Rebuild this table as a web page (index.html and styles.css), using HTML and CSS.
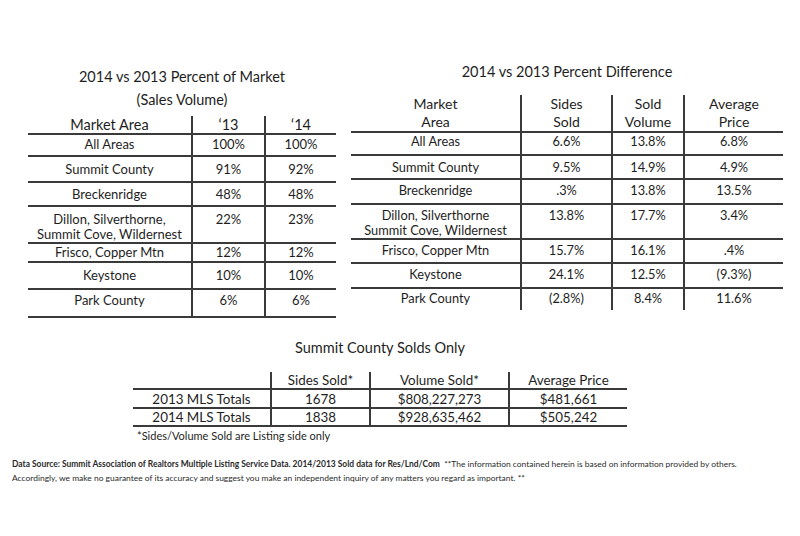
FILE: index.html
```html
<!DOCTYPE html>
<html>
<head>
<meta charset="utf-8">
<link rel="stylesheet" href="styles.css">
</head>
<body>
<div class="page">
  <div class="top">
    <section class="block block-left">
      <div class="title">2014 vs 2013 Percent of Market</div>
      <div class="subtitle">(Sales Volume)</div>
      <table class="grid grid-left">
        <colgroup><col class="lc1"><col class="lc2"><col class="lc3"></colgroup>
        <thead>
          <tr class="lh"><th>Market Area</th><th>‘13</th><th>‘14</th></tr>
        </thead>
        <tbody>
          <tr class="l1"><td>All Areas</td><td>100%</td><td>100%</td></tr>
          <tr class="l2 mid"><td>Summit County</td><td>91%</td><td>92%</td></tr>
          <tr class="l3 mid"><td>Breckenridge</td><td>48%</td><td>48%</td></tr>
          <tr class="l4"><td>Dillon, Silverthorne,<br>Summit Cove, Wildernest</td><td>22%</td><td>23%</td></tr>
          <tr class="l5 mid"><td>Frisco, Copper Mtn</td><td>12%</td><td>12%</td></tr>
          <tr class="l6 mid"><td>Keystone</td><td>10%</td><td>10%</td></tr>
          <tr class="l7"><td>Park County</td><td>6%</td><td>6%</td></tr>
        </tbody>
      </table>
    </section>
    <section class="block block-right">
      <div class="title">2014 vs 2013 Percent Difference</div>
      <table class="grid grid-right">
        <colgroup><col class="rc1"><col class="rc2"><col class="rc3"><col class="rc4"></colgroup>
        <thead>
          <tr class="rh"><th>Market<br>Area</th><th>Sides<br>Sold</th><th>Sold<br>Volume</th><th>Average<br>Price</th></tr>
        </thead>
        <tbody>
          <tr class="r1"><td>All Areas</td><td>6.6%</td><td>13.8%</td><td>6.8%</td></tr>
          <tr class="r2 mid"><td>Summit County</td><td>9.5%</td><td>14.9%</td><td>4.9%</td></tr>
          <tr class="r3"><td>Breckenridge</td><td>.3%</td><td>13.8%</td><td>13.5%</td></tr>
          <tr class="r4"><td>Dillon, Silverthorne<br>Summit Cove, Wildernest</td><td>13.8%</td><td>17.7%</td><td>3.4%</td></tr>
          <tr class="r5"><td>Frisco, Copper Mtn</td><td>15.7%</td><td>16.1%</td><td>.4%</td></tr>
          <tr class="r6"><td>Keystone</td><td>24.1%</td><td>12.5%</td><td>(9.3%)</td></tr>
          <tr class="r7"><td>Park County</td><td>(2.8%)</td><td>8.4%</td><td>11.6%</td></tr>
        </tbody>
      </table>
    </section>
  </div>

  <section class="solds">
    <div class="title">Summit County Solds Only</div>
    <table class="grid grid-solds">
      <colgroup><col class="sc1"><col class="sc2"><col class="sc3"><col class="sc4"></colgroup>
      <thead>
        <tr class="sh"><th></th><th>Sides Sold*</th><th>Volume Sold*</th><th>Average Price</th></tr>
      </thead>
      <tbody>
        <tr class="s1"><td>2013 MLS Totals</td><td>1678</td><td>$808,227,273</td><td>$481,661</td></tr>
        <tr class="s2"><td>2014 MLS Totals</td><td>1838</td><td>$928,635,462</td><td>$505,242</td></tr>
      </tbody>
    </table>
    <div class="footnote">*Sides/Volume Sold are Listing side only</div>
  </section>

  <footer class="source">
    <p class="src-line"><b>Data Source: Summit Association of Realtors Multiple Listing Service Data. 2014/2013 Sold data for Res/Lnd/Com</b>&nbsp; **The information contained herein is based on information provided by others.</p>
    <p class="src-line">Accordingly, we make no guarantee of its accuracy and suggest you make an independent inquiry of any matters you regard as important. **</p>
  </footer>
</div>
</body>
</html>
```

FILE: styles.css
```css
html, body {
  margin: 0;
  padding: 0;
  background: #ffffff;
}

body {
  font-family: "Lato", "Open Sans", sans-serif;
  color: #1e1e1e;
  width: 800px;
  height: 536px;
  overflow: hidden;
}

.page {
  display: flex;
  flex-direction: column;
}

.top {
  display: flex;
  align-items: flex-start;
  padding-left: 28px;
  gap: 15px;
}

.block {
  display: flex;
  flex-direction: column;
}

.block-left {
  width: 308px;
  padding-top: 67px;
}

.block-right {
  width: 432px;
  padding-top: 62px;
}

.title {
  font-size: 14.5px;
  line-height: 20px;
  text-align: center;
}

.block-left .title {
  margin-bottom: 3px;
}

.subtitle {
  font-size: 14.5px;
  line-height: 20px;
  text-align: center;
  margin-bottom: 6px;
}

.block-right .title {
  margin-bottom: 13px;
}

/* tables */
.grid {
  border-collapse: separate;
  border-spacing: 0;
  table-layout: fixed;
}

.grid th,
.grid td {
  padding: 0;
  text-align: center;
  font-weight: normal;
  vertical-align: top;
  white-space: nowrap;
  box-sizing: border-box;
  border-bottom: 2px solid #3a3a3a;
}

.grid th + th,
.grid td + td {
  border-left: 2px solid #3a3a3a;
}

.grid-right tbody tr:last-child td {
  border-bottom: none;
}

.grid tr.mid td {
  vertical-align: middle;
}

/* left table */
.grid-left { width: 308px; }
.lc1 { width: 163px; }
.lc2 { width: 73px; }
.lc3 { width: 72px; }

.grid-left th {
  font-size: 14.5px;
  line-height: 16px;
  height: 17px;
  padding-top: 1px;
}

.grid-left td {
  font-size: 13px;
  line-height: 15px;
}

.l1 td { height: 22px; padding-top: 2px; }
.l2 td { height: 26px; }
.l3 td { height: 24px; }
.l4 td { height: 36px; padding-top: 5px; }
.l5 td { height: 19px; }
.l6 td { height: 27px; }
.l7 td { height: 28px; padding-top: 3px; }

/* right table */
.grid-right { width: 432px; }
.rc1 { width: 169px; }
.rc2 { width: 91px; }
.rc3 { width: 72px; }
.rc4 { width: 100px; }

.grid-right th {
  font-size: 14px;
  line-height: 18px;
  height: 38px;
  vertical-align: middle;
}

.grid-right td {
  font-size: 12.8px;
  line-height: 15px;
}

.r1 td { height: 23px; padding-top: 1px; }
.r2 td { height: 24px; }
.r3 td { height: 25px; padding-top: 3px; }
.r4 td { height: 33px; padding-top: 3px; }
.r5 td { height: 24px; padding-top: 3px; }
.r6 td { height: 25px; padding-top: 3px; }
.r7 td { height: 21px; padding-top: 2px; }

/* solds table */
.solds {
  width: 494px;
  margin-left: 133px;
  margin-top: 20px;
  display: flex;
  flex-direction: column;
}

.solds .title {
  margin-bottom: 14px;
}

.grid-solds { width: 494px; }
.sc1 { width: 137px; }
.sc2 { width: 99px; }
.sc3 { width: 139px; }
.sc4 { width: 119px; }

.grid-solds th,
.grid-solds td {
  font-size: 13.4px;
  line-height: 16px;
  vertical-align: middle;
}

.sh th { height: 17px; }
.s1 td { height: 19px; }
.s2 td { height: 18px; }

.footnote {
  font-size: 11px;
  line-height: 14px;
  margin-top: 2px;
  padding-left: 4px;
}

/* footer */
.source {
  margin-top: 14px;
  padding-left: 12px;
}

.src-line {
  margin: 0;
  font-size: 8.45px;
  line-height: 14px;
  white-space: nowrap;
  color: #2a2a2a;
}

.src-line b {
  font-weight: bold;
}
```
